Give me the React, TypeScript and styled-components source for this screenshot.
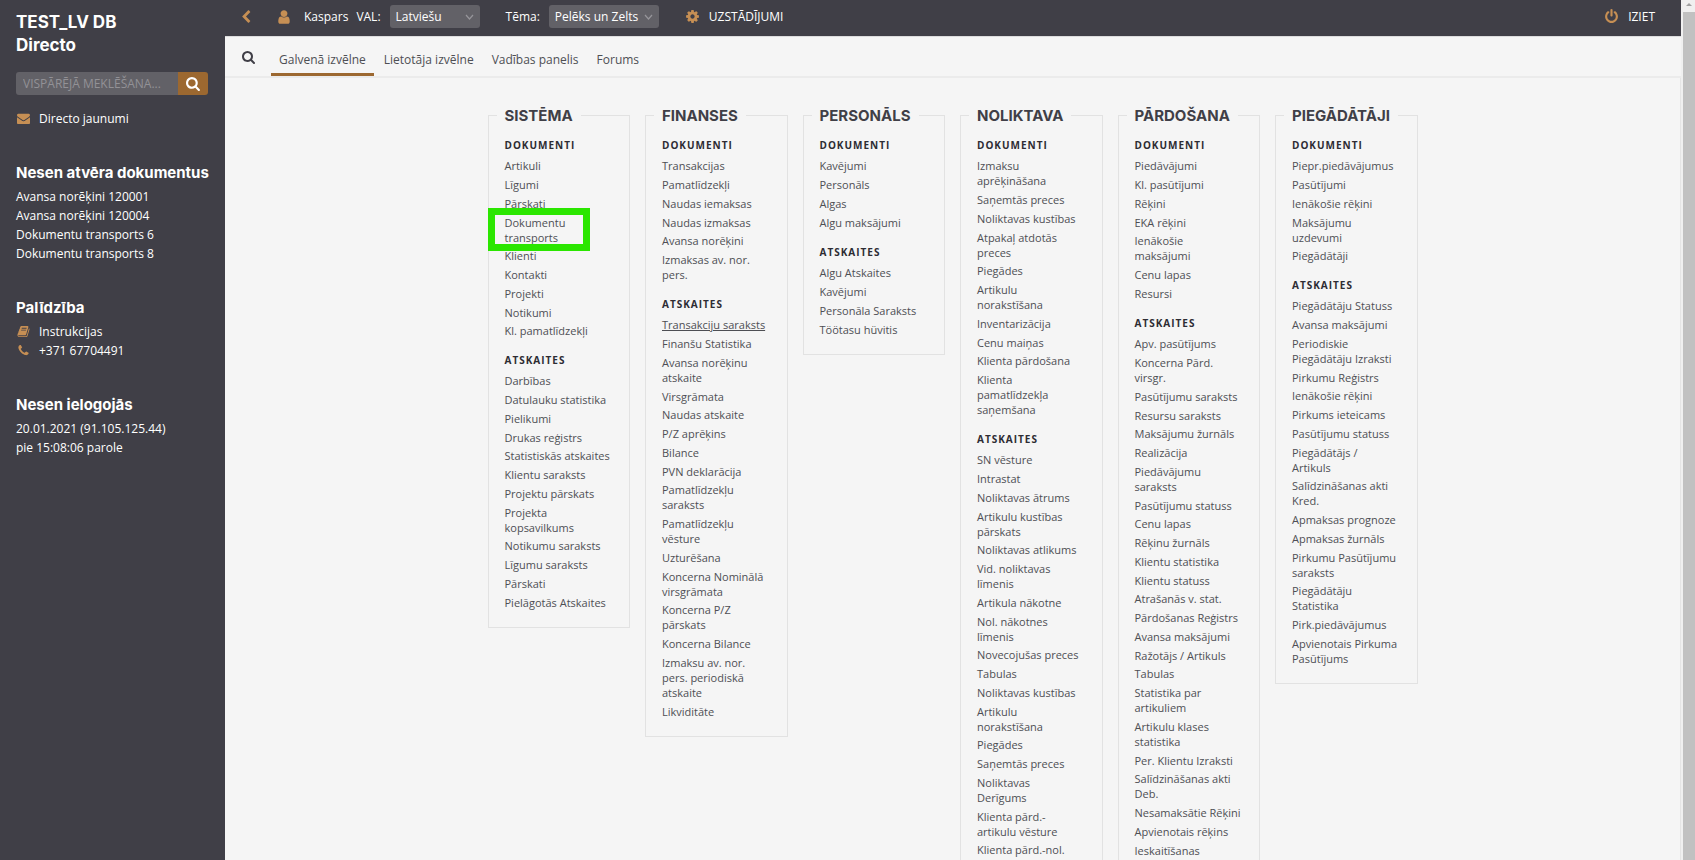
import React from "react";
import styled, { createGlobalStyle } from "styled-components";

const GlobalStyle = createGlobalStyle`
  *, *::before, *::after { box-sizing: border-box; }
  body { margin: 0; font: 12px/15px "Open Sans", "Noto Sans", sans-serif; color: #4e4f54; background: #f5f5f5; }
  ul { list-style: none; margin: 0; padding: 0; }
  a { color: inherit; text-decoration: none; }
  a:hover { text-decoration: underline; }
`;

const icons = {
  search:
    "M1152 832q0-185-131.5-316.5t-316.5-131.5-316.5 131.5-131.5 316.5 131.5 316.5 316.5 131.5 316.5-131.5 131.5-316.5zm512 832q0 52-38 90t-90 38q-54 0-90-38l-343-342q-179 124-399 124-143 0-273.5-55.5t-225-150-150-225-55.5-273.5 55.5-273.5 150-225 225-150 273.5-55.5 273.5 55.5 225 150 150 225 55.5 273.5q0 220-124 399l343 343q37 37 37 90z",
  user:
    "M1536 1399q0 109-62.5 187t-150.5 78h-854q-88 0-150.5-78t-62.5-187q0-85 8.5-160.5t31.5-152 58.5-131 94-89 134.5-34.5q131 128 313 128t313-128q76 0 134.5 34.5t94 89 58.5 131 31.5 152 8.5 160.5zm-256-887q0 159-112.5 271.5t-271.5 112.5-271.5-112.5-112.5-271.5 112.5-271.5 271.5-112.5 271.5 112.5 112.5 271.5z",
  cog:
    "M1152 896q0-106-75-181t-181-75-181 75-75 181 75 181 181 75 181-75 75-181zm512-109v222q0 12-8 23t-20 13l-185 28q-19 54-39 91 35 50 107 138 10 12 10 25t-9 23q-27 37-99 108t-94 71q-12 0-26-9l-138-108q-44 23-91 38-16 136-29 186-7 28-36 28h-222q-14 0-24.5-8.5t-11.5-21.5l-28-184q-49-16-90-37l-141 107q-10 9-25 9-14 0-25-11-126-114-165-168-7-10-7-23 0-12 8-23 15-21 51-66.5t54-70.5q-27-50-41-99l-183-27q-13-2-21-12.5t-8-23.5v-222q0-12 8-23t19-13l186-28q14-46 39-92-40-57-107-138-10-12-10-24 0-10 9-23 26-36 98.5-107.5t94.5-71.5q13 0 26 10l138 107q44-23 91-38 16-136 29-186 7-28 36-28h222q14 0 24.5 8.5t11.5 21.5l28 184q49 16 90 37l142-107q9-9 24-9 13 0 25 10 129 119 165 170 7 8 7 22 0 12-8 23-15 21-51 66.5t-54 70.5q26 50 41 98l183 28q13 2 21 12.5t8 23.5z",
  envelope:
    "M1792 710v794q0 66-47 113t-113 47h-1472q-66 0-113-47t-47-113v-794q44 49 101 87 362 246 497 345 57 42 92.5 65.5t94.5 48 110 24.5h2q51 0 110-24.5t94.5-48 92.5-65.5q170-123 498-345 57-39 100-87zm0-294q0 79-49 151t-122 123q-376 261-468 325-10 7-42.5 31t-54 38.5-52 32.5-57.5 27-50 9h-2q-23 0-50-9t-57.5-27-52-32.5-54-38.5-42.5-31q-91-64-262-182.5t-205-142.5q-62-42-117-115.5t-55-136.5q0-78 41.5-130t118.5-52h1472q65 0 112.5 47t47.5 113z",
  phone:
    "M1600 1240q0 27-10 70.5t-21 68.5q-21 50-122 106-94 51-186 51-27 0-52.5-3.5t-57.5-12.5-47.5-14.5-55.5-20.5-49-18q-98-35-175-83-128-79-264.5-215.5t-215.5-264.5q-48-77-83-175-3-9-18-49t-20.5-55.5-14.5-47.5-12.5-57.5-3.5-52.5q0-92 51-186 56-101 106-122 25-11 68.5-21t70.5-10q14 0 21 3 18 6 53 76 11 19 30 54t35 63.5 31 53.5q3 4 17.5 25t21.5 35.5 7 28.5q0 20-28.5 50t-62 55-62 53-28.5 46q0 9 5 22.5t8.5 20.5 14 24 11.5 19q76 137 174 235t235 174q2 1 19 11.5t24 14 20.5 8.5 22.5 5q18 0 46-28.5t53-62 55-62 50-28.5q14 0 28.5 7t35.5 21.5 25 17.5q25 15 53.5 31t63.5 35 54 30q70 35 76 53 3 7 3 21z",
  power:
    "M1664 896q0 156-61 298t-164 245-245 164-298 61-298-61-245-164-164-245-61-298q0-182 80.5-343t226.5-270q43-32 95.5-25t83.5 50q32 42 24.5 94.5t-49.5 84.5q-98 74-151.5 181t-53.5 228q0 104 40.5 198.5t109.5 163.5 163.5 109.5 198.5 40.5 198.5-40.5 163.5-109.5 109.5-163.5 40.5-198.5q0-121-53.5-228t-151.5-181q-42-32-49.5-84.5t24.5-94.5q31-43 84-50t95 25q146 109 226.5 270t80.5 343zm-640-768v640q0 52-38 90t-90 38-90-38-38-90v-640q0-52 38-90t90-38 90 38 38 90z",
  chevron:
    "M1427 301l-531 531 531 531q19 19 19 45t-19 45l-166 166q-19 19-45 19t-45-19l-742-742q-19-19-19-45t19-45l742-742q19-19 45-19t45 19l166 166q19 19 19 45t-19 45z",
  book:
    "M1703 478q40 57 18 129l-275 906q-19 64-76.5 107.5t-122.5 43.5h-923q-77 0-148.5-53.5t-99.5-131.5q-24-67-2-127 0-4 3-27t4-37q1-8-3-21.5t-3-19.5q2-11 8-21t16.5-23.5 16.5-23.5q23-38 45-91.5t30-91.5q3-10 .5-30t-.5-28q3-11 17-28t17-23q21-36 42-92t25-90q1-9-2.5-32t.5-28q4-13 22-30.5t22-22.5q19-26 42.5-84.5t27.5-96.5q1-8-3-25.5t-2-26.5q2-8 9-18t18-23 17-21q8-12 16.5-30.5t15-35 16-36 19.5-32 26.5-23.5 36-11.5 47.5 5.5l-1 3q38-9 51-9h761q74 0 114 56t18 130l-274 906q-36 119-71.5 153.5t-128.5 34.5h-869q-27 0-38 15-11 16-1 43 24 70 144 70h923q29 0 56-15.5t35-41.5l300-987q7-22 5-57 38 15 59 43zm-1064 2q-4 13 2 22.5t20 9.5h608q13 0 25.5-9.5t16.5-22.5l21-64q4-13-2-22.5t-20-9.5h-608q-13 0-25.5 9.5t-16.5 22.5zm-83 256q-4 13 2 22.5t20 9.5h608q13 0 25.5-9.5t16.5-22.5l21-64q4-13-2-22.5t-20-9.5h-608q-13 0-25.5 9.5t-16.5 22.5z",
};

const Svg = styled.svg<{ $size: number }>`
  width: ${(p) => p.$size}px;
  height: ${(p) => p.$size}px;
  flex: none;
  display: block;
  fill: currentColor;
`;

const Icon = ({ name, size }: { name: keyof typeof icons; size: number }) => (
  <Svg $size={size} viewBox="0 0 1792 1792" aria-hidden="true">
    <path d={icons[name]} />
  </Svg>
);

const Page = styled.div`
  display: grid;
  grid-template-columns: 225px minmax(0, 1fr) 14px;
  height: 100vh;
  overflow: hidden;
`;

const Sidebar = styled.aside`
  background: #403f47;
  color: #fff;
  padding: 11px 16px;
`;

const Brand = styled.h1`
  margin: 0 0 15px;
  font: 700 17px/23px Inter, sans-serif;
`;

const SearchForm = styled.form`
  display: flex;
  width: 192px;
  height: 23px;
  margin-bottom: 14px;
  border-radius: 3px;
  overflow: hidden;
`;

const SearchInput = styled.input`
  flex: 1;
  min-width: 0;
  border: 0;
  padding: 0 7px;
  background: #626167;
  color: #fff;
  font: inherit;
  &::placeholder { color: #929196; opacity: 1; }
`;

const SearchButton = styled.button`
  display: flex;
  align-items: center;
  justify-content: center;
  width: 30px;
  border: 0;
  padding: 0;
  background: #9c6830;
  color: #fff;
`;

const SideLink = styled.a`
  display: flex;
  align-items: center;
  gap: 8px;
  height: 19px;
`;

const SideIcon = styled.span`
  display: flex;
  justify-content: center;
  width: 15px;
  color: #c68f54;
`;

const SideBlock = styled.section`
  margin-top: 33px;
`;

const SideTitle = styled.h2`
  margin: 0 0 3px;
  font: 700 15px/23px Inter, sans-serif;
  white-space: nowrap;
`;

const SideText = styled.p`
  margin: 0;
  line-height: 19px;
`;

const Main = styled.main`
  min-width: 0;
  background: #f5f5f5;
`;

const TopBar = styled.header`
  display: flex;
  align-items: center;
  height: 36px;
  padding: 0 26px 3px 14px;
  background: #403f47;
  color: #fff;
`;

const BackButton = styled.button`
  border: 0;
  padding: 0;
  margin-right: 23px;
  background: none;
  color: #c68f54;
`;

const TopLink = styled.a<{ $gap: number }>`
  display: flex;
  align-items: center;
  gap: ${(p) => p.$gap}px;
  svg { color: #c68f54; }
`;

const Field = styled.div<{ $before: number }>`
  display: flex;
  align-items: center;
  gap: 9px;
  margin-left: ${(p) => p.$before}px;
`;

const SelectWrap = styled.div<{ $width: number }>`
  display: grid;
  align-items: center;
  width: ${(p) => p.$width}px;
  select, svg { grid-area: 1 / 1; }
  svg { justify-self: end; margin-right: 6px; pointer-events: none; }
`;

const Select = styled.select`
  appearance: none;
  height: 23px;
  border: 0;
  border-radius: 3px;
  padding: 0 6px;
  background: #626167;
  color: #fff;
  font: inherit;
`;

const Spacer = styled.div<{ $grow?: boolean }>`
  width: 26px;
  flex-grow: ${(p) => (p.$grow ? 1 : 0)};
`;

const TabBar = styled.nav`
  display: flex;
  height: 42px;
  padding-left: 17px;
  border-top: 1px solid #dcdcdd;
  border-bottom: 2px solid #ebebeb;
`;

const TabSearch = styled.button`
  border: 0;
  margin-right: 15px;
  padding: 0;
  background: none;
  color: #403f47;
`;

const Tab = styled.a<{ $active?: boolean }>`
  padding: 15px 8px 0;
  margin-right: 2px;
  line-height: 16px;
  border-bottom: 3px solid ${(p) => (p.$active ? "#9c6830" : "transparent")};
`;

const Content = styled.div`
  padding-top: 28px;
  border-right: 1px solid #e5e5e5;
`;

const Columns = styled.div`
  display: grid;
  grid-template-columns: repeat(6, minmax(0, 1fr));
  align-items: start;
  gap: 15px;
  max-width: 930px;
  margin: 0 auto;
`;

const Panel = styled.fieldset`
  min-width: 0;
  margin: 0;
  padding: 11px 8px 4px;
  border: 1px solid #e2e2e2;
`;

const PanelTitle = styled.legend`
  padding: 0 8px;
  font: 700 15px/19px Inter, sans-serif;
  color: #403f47;
`;

const GroupTitle = styled.h3`
  margin: 0 8px;
  font: 700 10px/19px "Open Sans", sans-serif;
  letter-spacing: 1px;
  color: #2d2c33;
`;

const MenuList = styled.ul`
  margin: 3px 8px 13px;
  font-size: 11px;
`;

const MenuItem = styled.li<{ $marked?: boolean }>`
  position: relative;
  margin-bottom: 4px;
  white-space: pre;
  &:nth-child(4n) { margin-bottom: 3px; }
  ${(p) =>
    p.$marked &&
    `&::after {
      content: "";
      position: absolute;
      z-index: 1;
      left: -17px;
      top: -7px;
      width: 102px;
      height: 43px;
      border: 7px solid #2be600;
      pointer-events: none;
    }`}
`;

const MenuLink = styled.a<{ $underlined?: boolean }>`
  text-decoration: ${(p) => (p.$underlined ? "underline" : "none")};
`;

const ScrollTrack = styled.div`
  padding: 0 0 27px 2px;
  display: flex;
  flex-direction: column;
  background: #f0f0f0;
`;

const ScrollArrow = styled.div`
  height: 12px;
  display: flex;
  justify-content: center;
  padding-top: 3px;
  &::before {
    content: "";
    height: 0;
    border: 3px solid transparent;
    border-top: 0;
    border-bottom-color: #a0a0a0;
  }
`;

const ScrollThumb = styled.div`
  flex: 1;
  background: #c1c1c1;
`;

type Column = { title: string; docs: string[]; reports: string[] };

const columns: Column[] = [
  {
    title: "SISTĒMA",
    docs: ["Artikuli", "Līgumi", "Pārskati", "Dokumentu\ntransports", "Klienti", "Kontakti", "Projekti", "Notikumi", "Kl. pamatlīdzekļi"],
    reports: ["Darbības", "Datulauku statistika", "Pielikumi", "Drukas reģistrs", "Statistiskās atskaites", "Klientu saraksts", "Projektu pārskats", "Projekta\nkopsavilkums", "Notikumu saraksts", "Līgumu saraksts", "Pārskati", "Pielāgotās Atskaites"],
  },
  {
    title: "FINANSES",
    docs: ["Transakcijas", "Pamatlīdzekļi", "Naudas iemaksas", "Naudas izmaksas", "Avansa norēķini", "Izmaksas av. nor.\npers."],
    reports: ["Transakciju saraksts", "Finanšu Statistika", "Avansa norēķinu\natskaite", "Virsgrāmata", "Naudas atskaite", "P/Z aprēķins", "Bilance", "PVN deklarācija", "Pamatlīdzekļu\nsaraksts", "Pamatlīdzekļu\nvēsture", "Uzturēšana", "Koncerna Nominālā\nvirsgrāmata", "Koncerna P/Z\npārskats", "Koncerna Bilance", "Izmaksu av. nor.\npers. periodiskā\natskaite", "Likviditāte"],
  },
  {
    title: "PERSONĀLS",
    docs: ["Kavējumi", "Personāls", "Algas", "Algu maksājumi"],
    reports: ["Algu Atskaites", "Kavējumi", "Personāla Saraksts", "Töötasu hüvitis"],
  },
  {
    title: "NOLIKTAVA",
    docs: ["Izmaksu\naprēķināšana", "Saņemtās preces", "Noliktavas kustības", "Atpakaļ atdotās\npreces", "Piegādes", "Artikulu\nnorakstīšana", "Inventarizācija", "Cenu maiņas", "Klienta pārdošana", "Klienta\npamatlīdzekļa\nsaņemšana"],
    reports: ["SN vēsture", "Intrastat", "Noliktavas ātrums", "Artikulu kustības\npārskats", "Noliktavas atlikums", "Vid. noliktavas\nlīmenis", "Artikula nākotne", "Nol. nākotnes\nlīmenis", "Novecojušas preces", "Tabulas", "Noliktavas kustības", "Artikulu\nnorakstīšana", "Piegādes", "Saņemtās preces", "Noliktavas\nDerīgums", "Klienta pārd.-\nartikulu vēsture", "Klienta pārd.-nol.\nkustība"],
  },
  {
    title: "PĀRDOŠANA",
    docs: ["Piedāvājumi", "Kl. pasūtījumi", "Rēķini", "EKA rēķini", "Ienākošie\nmaksājumi", "Cenu lapas", "Resursi"],
    reports: ["Apv. pasūtījums", "Koncerna Pārd.\nvirsgr.", "Pasūtījumu saraksts", "Resursu saraksts", "Maksājumu žurnāls", "Realizācija", "Piedāvājumu\nsaraksts", "Pasūtījumu statuss", "Cenu lapas", "Rēķinu žurnāls", "Klientu statistika", "Klientu statuss", "Atrašanās v. stat.", "Pārdošanas Reģistrs", "Avansa maksājumi", "Ražotājs / Artikuls", "Tabulas", "Statistika par\nartikuliem", "Artikulu klases\nstatistika", "Per. Klientu Izraksti", "Salīdzināšanas akti\nDeb.", "Nesamaksātie Rēķini", "Apvienotais rēķins", "Ieskaitīšanas"],
  },
  {
    title: "PIEGĀDĀTĀJI",
    docs: ["Piepr.piedāvājumus", "Pasūtījumi", "Ienākošie rēķini", "Maksājumu\nuzdevumi", "Piegādātāji"],
    reports: ["Piegādātāju Statuss", "Avansa maksājumi", "Periodiskie\nPiegādātāju Izraksti", "Pirkumu Reģistrs", "Ienākošie rēķini", "Pirkums ieteicams", "Pasūtījumu statuss", "Piegādātājs /\nArtikuls", "Salīdzināšanas akti\nKred.", "Apmaksas prognoze", "Apmaksas žurnāls", "Pirkumu Pasūtījumu\nsaraksts", "Piegādātāju\nStatistika", "Pirk.piedāvājumus", "Apvienotais Pirkuma\nPasūtījums"],
  },
];

const Menu = ({ items }: { items: string[] }) => (
  <MenuList>
    {items.map((item) => (
      <MenuItem key={item} $marked={item === "Dokumentu\ntransports"}>
        <MenuLink href="#" $underlined={item === "Transakciju saraksts"}>{item}</MenuLink>
      </MenuItem>
    ))}
  </MenuList>
);

const Dropdown = ({ id, width, value }: { id: string; width: number; value: string }) => (
  <SelectWrap $width={width}>
    <Select id={id} defaultValue={value}>
      <option>{value}</option>
    </Select>
    <svg width="9" height="6" viewBox="0 0 9 6" aria-hidden="true">
      <path d="M1 1l3.500 4L8 1" fill="none" stroke="#96959a" strokeWidth="1.200" />
    </svg>
  </SelectWrap>
);

export default function App() {
  return (
    <Page>
      <GlobalStyle />
      <Sidebar>
        <Brand>TEST_LV DB<br />Directo</Brand>
        <SearchForm>
          <SearchInput aria-label="Vispārējā meklēšana" placeholder="VISPĀRĒJĀ MEKLĒŠANA..." />
          <SearchButton type="button" aria-label="Meklēt"><Icon name="search" size={15} /></SearchButton>
        </SearchForm>
        <SideLink href="#"><SideIcon><Icon name="envelope" size={13} /></SideIcon>Directo jaunumi</SideLink>
        <SideBlock>
          <SideTitle>Nesen atvēra dokumentus</SideTitle>
          {["Avansa norēķini 120001", "Avansa norēķini 120004", "Dokumentu transports 6", "Dokumentu transports 8"].map((doc) => (
            <SideLink key={doc} href="#">{doc}</SideLink>
          ))}
        </SideBlock>
        <SideBlock>
          <SideTitle>Palīdzība</SideTitle>
          <SideLink href="#"><SideIcon><Icon name="book" size={13} /></SideIcon>Instrukcijas</SideLink>
          <SideLink href="#"><SideIcon><Icon name="phone" size={13} /></SideIcon>+371 67704491</SideLink>
        </SideBlock>
        <SideBlock>
          <SideTitle>Nesen ielogojās</SideTitle>
          <SideText>20.01.2021 (91.105.125.44)<br />pie 15:08:06 parole</SideText>
        </SideBlock>
      </Sidebar>
      <Main>
        <TopBar>
          <BackButton type="button" aria-label="Atpakaļ"><Icon name="chevron" size={14} /></BackButton>
          <TopLink href="#" $gap={12}><Icon name="user" size={16} />Kaspars</TopLink>
          <Field $before={8}>
            <label htmlFor="lang">VAL:</label>
            <Dropdown id="lang" width={90} value="Latviešu" />
          </Field>
          <Field $before={26}>
            <label htmlFor="theme">Tēma:</label>
            <Dropdown id="theme" width={110} value="Pelēks un Zelts" />
          </Field>
          <Spacer />
          <TopLink href="#" $gap={9}><Icon name="cog" size={15} />UZSTĀDĪJUMI</TopLink>
          <Spacer $grow />
          <TopLink href="#" $gap={9}><Icon name="power" size={15} />IZIET</TopLink>
        </TopBar>
        <TabBar>
          <TabSearch type="button" aria-label="Meklēt izvēlnē"><Icon name="search" size={14} /></TabSearch>
          <Tab href="#" $active>Galvenā izvēlne</Tab>
          <Tab href="#">Lietotāja izvēlne</Tab>
          <Tab href="#">Vadības panelis</Tab>
          <Tab href="#">Forums</Tab>
        </TabBar>
        <Content>
          <Columns>
            {columns.map((column) => (
              <Panel key={column.title}>
                <PanelTitle>{column.title}</PanelTitle>
                <GroupTitle>DOKUMENTI</GroupTitle>
                <Menu items={column.docs} />
                <GroupTitle>ATSKAITES</GroupTitle>
                <Menu items={column.reports} />
              </Panel>
            ))}
          </Columns>
        </Content>
      </Main>
      <ScrollTrack>
        <ScrollArrow />
        <ScrollThumb />
      </ScrollTrack>
    </Page>
  );
}
